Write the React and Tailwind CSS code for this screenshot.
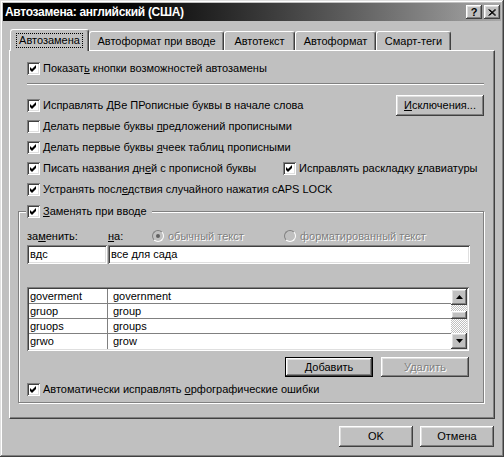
import React from 'react';

const raised = 'shadow-[inset_-1px_-1px_#404040,inset_1px_1px_#ffffff,inset_-2px_-2px_#808080,inset_2px_2px_#dfdfdf]';
const sunken = 'shadow-[inset_1px_1px_#808080,inset_-1px_-1px_#ffffff,inset_2px_2px_#404040,inset_-2px_-2px_#dfdfdf]';
const off = 'text-[#808080] [text-shadow:1px_1px_0_#ffffff]';

function Check({ on = true }) {
  return (
    <span className={`flex w-[13px] h-[13px] shrink-0 bg-white ${sunken}`}>
      {on && (
        <svg width="13" height="13" viewBox="0 0 13 13">
          <polygon points="3,5 5,7 9,3 9,6 5,10 3,8" fill="#000" />
        </svg>
      )}
    </span>
  );
}

function Row({ on, children, className = '' }) {
  return (
    <div className={`flex items-center h-[21px] gap-[3px] ${className}`}>
      <Check on={on} />
      <span className="whitespace-nowrap">{children}</span>
    </div>
  );
}

function Radio({ on }) {
  return (
    <span className="flex items-center justify-center w-[12px] h-[12px] shrink-0 rounded-full border border-t-[#808080] border-l-[#808080] border-r-white border-b-white bg-[#c0c0c0]">
      {on && <span className="w-[4px] h-[4px] rounded-full bg-[#606060]" />}
    </span>
  );
}

function Arrow({ up }) {
  return (
    <svg width="7" height="4" viewBox="0 0 7 4">
      <polygon points={up ? '3.5,0 7,4 0,4' : '0,0 7,0 3.5,4'} fill="#000" />
    </svg>
  );
}

const words = [
  ['goverment', 'government'],
  ['gruop', 'group'],
  ['gruops', 'groups'],
  ['grwo', 'grow'],
];

const tabs = [
  ['Автоформат при вводе', 'w-[135px]'],
  ['Автотекст', 'w-[71px]'],
  ['Автоформат', 'w-[81px]'],
  ['Смарт-теги', 'w-[75px]'],
];

export default function App() {
  return (
    <div className={`w-[504px] h-[457px] bg-[#c0c0c0] p-[3px] flex flex-col text-[11px] text-black font-['Liberation_Sans',Arial,sans-serif] ${'shadow-[inset_-1px_-1px_#404040,inset_1px_1px_#dfdfdf,inset_-2px_-2px_#808080,inset_2px_2px_#ffffff]'}`}>
      {/* заголовок */}
      <div className="flex items-center h-[18px] pl-[2px] pr-[1px] bg-linear-to-r from-black from-10% to-[#a8a8a8]">
        <span className="text-white font-bold text-[12px] tracking-[-0.3px] whitespace-nowrap">Автозамена: английский (США)</span>
        <div className="ml-auto flex gap-[2px]">
          <span className={`flex items-center justify-center w-[16px] h-[14px] bg-[#c0c0c0] ${raised} font-bold text-[11px] leading-none`}>?</span>
          <span className={`flex items-center justify-center w-[16px] h-[14px] bg-[#c0c0c0] ${raised}`}>
            <svg width="8" height="7" viewBox="0 0 8 7">
              <path d="M0.5 0.5 L7 6.5 M1.5 0.5 L8 6.5 M7 0.5 L0.5 6.5 M8 0.5 L1.5 6.5" stroke="#000" strokeWidth="1" />
            </svg>
          </span>
        </div>
      </div>

      {/* вкладки */}
      <div className="flex items-end h-[21px] mt-[8px] ml-[7px]">
        <div className="relative z-10 flex items-center justify-center w-[79px] h-[22px] -mb-[1px] bg-[#c0c0c0] border-t border-l border-white border-r border-r-[#404040] rounded-t-[3px] shadow-[inset_-1px_0_#808080]">
          <span className="px-[2px] leading-[13px] outline outline-1 outline-dotted outline-black">Автозамена</span>
        </div>
        {tabs.map(([t, w]) => (
          <div key={t} className={`flex items-center justify-center ${w} h-[19px] border-t border-l border-white border-r border-r-[#404040] rounded-t-[3px] shadow-[inset_-1px_0_#808080] whitespace-nowrap`}>
            {t}
          </div>
        ))}
      </div>

      {/* панель */}
      <div className="mx-[6px] h-[369px] flex flex-col border-t border-l border-white border-r border-b border-r-[#404040] border-b-[#404040] shadow-[inset_-1px_-1px_#808080]">
        <div className="ml-[17px] w-[457px] flex flex-col">
          <Row className="mt-[7px]">Показат<u>ь</u> кнопки возможностей автозамены</Row>
          <div className="mt-[4px] h-[2px] border-t border-[#808080] border-b border-b-white" />
          <div className="mt-[10px] flex items-center justify-between h-[21px]">
            <div className="flex items-center gap-[3px]">
              <Check />
              <span className="whitespace-nowrap">Исправлять <u>Д</u>Ве ПРописные буквы в начале слова</span>
            </div>
            <div className={`flex items-center justify-center w-[88px] h-[21px] ${raised}`}>
              <span><u>И</u>сключения...</span>
            </div>
          </div>
          <Row on={false}>Делать первые буквы <u>п</u>редложений прописными</Row>
          <Row>Делать первые буквы <u>я</u>чеек таблиц прописными</Row>
          <div className="flex items-center h-[21px]">
            <div className="flex items-center gap-[3px] w-[256px]">
              <Check />
              <span className="whitespace-nowrap">Писать названия дн<u>е</u>й с прописной буквы</span>
            </div>
            <Check />
            <span className="ml-[3px] whitespace-nowrap">Исправлять раскладку <u>к</u>лавиатуры</span>
          </div>
          <Row>Устранять посл<u>е</u>дствия случайного нажатия cAPS LOCK</Row>
        </div>

        {/* группа */}
        <div className="mt-[11px] ml-[8px] w-[466px] pl-[8px] pb-[4px] flex flex-col border border-[#808080] shadow-[inset_1px_1px_#ffffff,1px_1px_#ffffff]">
          <div className="-mt-[9px] h-[16px] w-fit flex items-center gap-[3px] bg-[#c0c0c0] pl-[1px] pr-[5px] -ml-[1px]">
            <Check />
            <span><u>З</u>аменять при вводе</span>
          </div>
          <div className="mt-[10px] h-[14px] flex items-center">
            <span className="w-[81px]">за<u>м</u>енить:</span>
            <span className="w-[44px]"><u>н</u>а:</span>
            <div className="w-[132px] flex items-center gap-[4px]">
              <Radio on />
              <span className={off}>обычный текст</span>
            </div>
            <div className="flex items-center gap-[4px]">
              <Radio />
              <span className={off}>форматированный текст</span>
            </div>
          </div>
          <div className="mt-[2px] flex gap-[1px]">
            <div className={`w-[80px] h-[19px] bg-white ${sunken} flex items-center px-[3px]`}>вдс</div>
            <div className={`w-[362px] h-[19px] bg-white ${sunken} flex items-center px-[3px]`}>все для сада</div>
          </div>
          <div className={`mt-[23px] w-[442px] h-[64px] bg-white ${sunken} p-[2px] flex`}>
            <div className="flex-1 flex flex-col overflow-hidden">
              {words.map(([a, b], i) => (
                <div key={a} className={`flex h-[15px] shrink-0 ${i < 3 ? 'border-b border-[#808080]' : ''}`}>
                  <span className="w-[79px] pl-[1px] border-r border-[#808080] leading-[14px]">{a}</span>
                  <span className="pl-[5px] leading-[14px]">{b}</span>
                </div>
              ))}
            </div>
            <div className="w-[16px] flex flex-col">
              <div className={`h-[16px] bg-[#c0c0c0] ${raised} flex items-center justify-center`}><Arrow up /></div>
              <div className="flex-1 flex flex-col bg-[repeating-conic-gradient(#c0c0c0_0%_25%,#ffffff_0%_50%)] bg-[length:2px_2px]">
                <div className={`mt-[6px] h-[8px] bg-[#c0c0c0] ${raised}`} />
              </div>
              <div className={`h-[16px] bg-[#c0c0c0] ${raised} flex items-center justify-center`}><Arrow /></div>
            </div>
          </div>
          <div className="mt-[6px] w-[442px] flex justify-end gap-[8px]">
            <div className="w-[88px] h-[20px] border border-black">
              <div className={`h-full flex items-center justify-center ${raised}`}><span><u>Д</u>обавить</span></div>
            </div>
            <div className={`w-[88px] h-[20px] flex items-center justify-center ${raised}`}>
              <span className={off}>Удалить</span>
            </div>
          </div>
          <Row className="mt-[4px] !h-[17px]">Автоматически исправлять <u>о</u>рфографические ошибки</Row>
        </div>
      </div>

      {/* кнопки */}
      <div className="mt-[7px] pr-[7px] flex justify-end gap-[7px]">
        <div className={`w-[74px] h-[21px] flex items-center justify-center ${raised}`}>OK</div>
        <div className={`w-[74px] h-[21px] flex items-center justify-center ${raised}`}>Отмена</div>
      </div>
    </div>
  );
}
